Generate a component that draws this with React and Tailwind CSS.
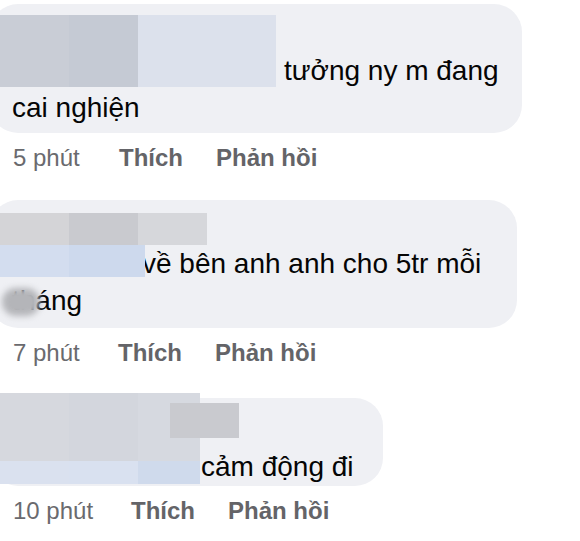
import React from 'react';

// pixelated name blur laid over the bubble
const Mosaic = ({ className, rows }) => (
  <div className={`absolute flex flex-col ${className}`}>
    {rows.map((row, i) => (
      <div key={i} className="flex">
        {row.map((cell, j) => (
          <div key={j} className={cell} />
        ))}
      </div>
    ))}
  </div>
);

const Meta = ({ time, first }) => (
  <div className="flex pl-[23px] text-[24px] leading-[30px] text-[#6a6a6e] mt-[10px] whitespace-nowrap">
    <span className={first}>{time}</span>
    <span className="w-[97px] font-bold text-[#646468]">Thích</span>
    <span className="font-bold text-[#646468]">Phản hồi</span>
  </div>
);

export default function App() {
  return (
    <div className="w-[580px] h-[541px] bg-white overflow-hidden font-['Liberation_Sans',Arial,sans-serif] text-[#050505]">
      <div className="-ml-[10px]">
        {/* comment 1 */}
        <div className="relative mt-[4px] w-[532px] rounded-[28px] bg-[#eff0f4] pl-[22px] pt-[48px] pb-[7px]">
          <Mosaic
            className="left-[10px] top-[11px]"
            rows={[['w-[69px] h-[72px] bg-[#c9cdd6]', 'w-[69px] h-[72px] bg-[#c5cad4]', 'w-[138px] h-[72px] bg-[#dce1ec]']]}
          />
          <p className="text-[28px] leading-[37px] indent-[272px]">
            tưởng ny m đang
            <br />
            cai nghiện
          </p>
        </div>
        <Meta time="5 phút" first="w-[106px]" />

        {/* comment 2 */}
        <div className="relative mt-[27px] w-[527px] rounded-[28px] bg-[#eff0f4] pl-[22px] pt-[45px] pb-[9px]">
          <p className="text-[28px] leading-[37px] indent-[130px]">
            về bên anh anh cho 5tr mỗi
            <br />
            tháng
          </p>
          <Mosaic
            className="left-[10px] top-[13px]"
            rows={[
              ['w-[69px] h-[32px] bg-[#d4d4d7]', 'w-[69px] h-[32px] bg-[#c9cacf]', 'w-[69px] h-[32px] bg-[#d6d7db]'],
              ['w-[69px] h-[32px] bg-[#d3ddef]', 'w-[76px] h-[32px] bg-[#cdd9ed]'],
            ]}
          />
          <div className="absolute left-[12px] top-[88px] w-[38px] h-[28px] rounded-full bg-[#b4b5b9] blur-[3px]" />
        </div>
        <Meta time="7 phút" first="w-[105px]" />

        {/* comment 3 */}
        <div className="relative mt-[30px] w-[393px] rounded-[28px] bg-[#eff0f4] pl-[22px] pt-[50px] pb-[1px]">
          <p className="text-[28px] leading-[37px] indent-[189px]">cảm động đi</p>
          <Mosaic
            className="left-[10px] -top-[5px]"
            rows={[
              ['w-[69px] h-[68px] bg-[#d6d8de]', 'w-[69px] h-[68px] bg-[#d3d6dd]', 'w-[62px] h-[68px] bg-[#d6d9e0]'],
              ['w-[69px] h-[23px] bg-[#dae1ef]', 'w-[69px] h-[23px] bg-[#d9e1f0]', 'w-[62px] h-[23px] bg-[#cfdaec]'],
            ]}
          />
          <div className="absolute left-[180px] top-[5px] w-[69px] h-[35px] bg-[#c9cacf]" />
        </div>
        <Meta time="10 phút" first="w-[118px]" />
      </div>
    </div>
  );
}
